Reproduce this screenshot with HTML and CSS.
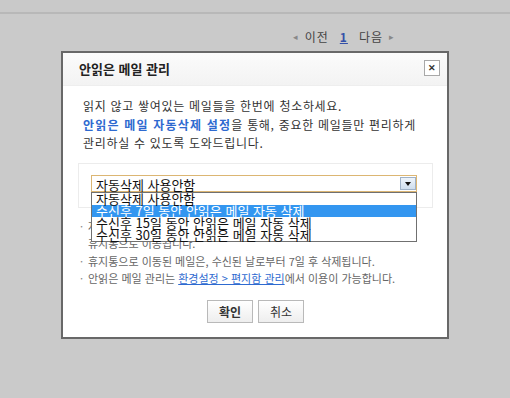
FILE: index.html
```html
<!DOCTYPE html>
<html lang="ko">
<head>
    <meta charset="UTF-8">
    <title>안읽은 메일 관리</title>
    <link rel="stylesheet" href="styles.css">
</head>
<body>

    <!-- 상단 바 -->
    <div class="topbar"></div>

    <!-- 페이지 이동 -->
    <div class="paging">
        <span class="arr">&#9666;</span>
        <span class="prev">이전</span>
        <a class="num" href="#">1</a>
        <span class="next">다음</span>
        <span class="arr">&#9656;</span>
    </div>

    <!-- 안읽은 메일 관리 레이어 -->
    <div class="dialog">
        <div class="dialog-head">
            <h2>안읽은 메일 관리</h2>
            <button class="close">&#10005;</button>
        </div>
        <div class="dialog-body">
            <p class="intro">
                읽지 않고 쌓여있는 메일들을 한번에 청소하세요.<br>
                <strong>안읽은 메일 자동삭제 설정</strong>을 통해, 중요한 메일들만 편리하게<br>
                관리하실 수 있도록 도와드립니다.
            </p>
            <div class="setbox">
                <div class="select">
                    <span class="value">자동삭제 사용안함</span>
                    <span class="drop"></span>
                    <ul class="options">
                        <li>자동삭제 사용안함</li>
                        <li class="on">수신후 7일 동안 안읽은 메일 자동 삭제</li>
                        <li>수신후 15일 동안 안읽은 메일 자동 삭제</li>
                        <li>수신후 30일 동안 안읽은 메일 자동 삭제</li>
                    </ul>
                </div>
            </div>
            <ul class="notes">
                <li>자동삭제 설정 시 기간이 지난 안읽은 메일은 자동 삭제되며, 이 메일을<br>휴지통으로 이동됩니다.</li>
                <li>휴지통으로 이동된 메일은, 수신된 날로부터 7일 후 삭제됩니다.</li>
                <li>안읽은 메일 관리는 <a href="#">환경설정 &gt; 편지함 관리</a>에서 이용이 가능합니다.</li>
            </ul>
            <div class="btns">
                <button class="btn ok">확인</button>
                <button class="btn">취소</button>
            </div>
        </div>
    </div>

</body>
</html>
```

FILE: styles.css
```css
body {
    margin: 0;
    background: #cacaca;
    font-family: "Noto Sans CJK KR", "Noto Sans", sans-serif;
    font-size: 12px;
    color: #333;
}
.topbar {
    height: 12px;
    border-bottom: 2px solid #b8b8b8;
    background: #c9c9c9;
}
.paging {
    display: flex;
    align-items: center;
    justify-content: flex-end;
    gap: 6px;
    height: 18px;
    line-height: 18px;
    margin-top: 14px;
    padding-right: 115px;
    color: #444;
    letter-spacing: 1px;
}
.paging .arr {
    font-size: 9px;
    color: #888;
}
.paging .num {
    color: #3450a8;
    font-weight: bold;
    margin: 0 5px;
}
.dialog {
    width: 384px;
    margin: 5px 0 0 61px;
    border: 2px solid #686868;
    background: #fff;
}
.dialog-head {
    position: relative;
    height: 32px;
    background: linear-gradient(#fbfbfb, #f3f3f3);
    border-bottom: 1px solid #eee;
}
.dialog-head h2 {
    margin: 0;
    padding-left: 16px;
    font-size: 13px;
    line-height: 32px;
    color: #222;
}
.close {
    position: absolute;
    top: 7px;
    right: 7px;
    width: 16px;
    height: 16px;
    padding: 0;
    border: 1px solid #a8a8a8;
    background: #fff;
    font-size: 9px;
    font-weight: bold;
    line-height: 14px;
    color: #333;
}
.dialog-body {
    padding: 11px 14px 14px 15px;
}
.intro {
    margin: 0 0 10px;
    padding-left: 5px;
    line-height: 18.5px;
    letter-spacing: 0.7px;
    color: #333;
}
.intro strong {
    color: #2e6ad0;
    letter-spacing: 1.2px;
}
.setbox {
    height: 32px;
    padding: 11px 15px 0 12px;
    border: 1px solid #ececec;
}
.select {
    position: relative;
    height: 15px;
    border: 1px solid #dcb673;
    background: #fff;
}
.select .value {
    padding-left: 4px;
    font-size: 13px;
    line-height: 15px;
    color: #111;
}
.drop {
    position: absolute;
    top: 1px;
    right: 0;
    width: 16px;
    height: 13px;
    border: 1px solid #9fb2c8;
    background: linear-gradient(#eef4fb, #cfdeee);
    box-sizing: border-box;
}
.drop::after {
    content: "";
    position: absolute;
    top: 4px;
    left: 4px;
    border-left: 3px solid transparent;
    border-right: 3px solid transparent;
    border-top: 4px solid #111;
}
.options {
    position: absolute;
    z-index: 10;
    top: 16px;
    left: -1px;
    right: -1px;
    margin: 0;
    padding: 0;
    list-style: none;
    border: 1px solid #707070;
    background: #fff;
    font-size: 13px;
    line-height: 12px;
    color: #111;
}
.options li {
    height: 12px;
    padding-left: 4px;
}
.options li.on {
    background: #3396f0;
    color: #fff;
}
.notes {
    margin: 10px 0 0;
    padding: 0 0 0 2px;
    list-style: none;
    font-size: 11px;
    line-height: 17.5px;
    color: #666;
}
.notes li {
    position: relative;
    padding-left: 8px;
}
.notes li::before {
    content: "·";
    position: absolute;
    left: 0;
    color: #888;
}
.notes a {
    color: #2e6ad0;
}
.btns {
    display: flex;
    justify-content: center;
    gap: 5px;
    margin-top: 12px;
}
.btn {
    width: 46px;
    height: 23px;
    padding: 0;
    border: 1px solid #b9b9b9;
    background: linear-gradient(#fff, #eee);
    font-family: inherit;
    font-size: 12px;
    color: #333;
}
.btn.ok {
    font-weight: bold;
}
```
